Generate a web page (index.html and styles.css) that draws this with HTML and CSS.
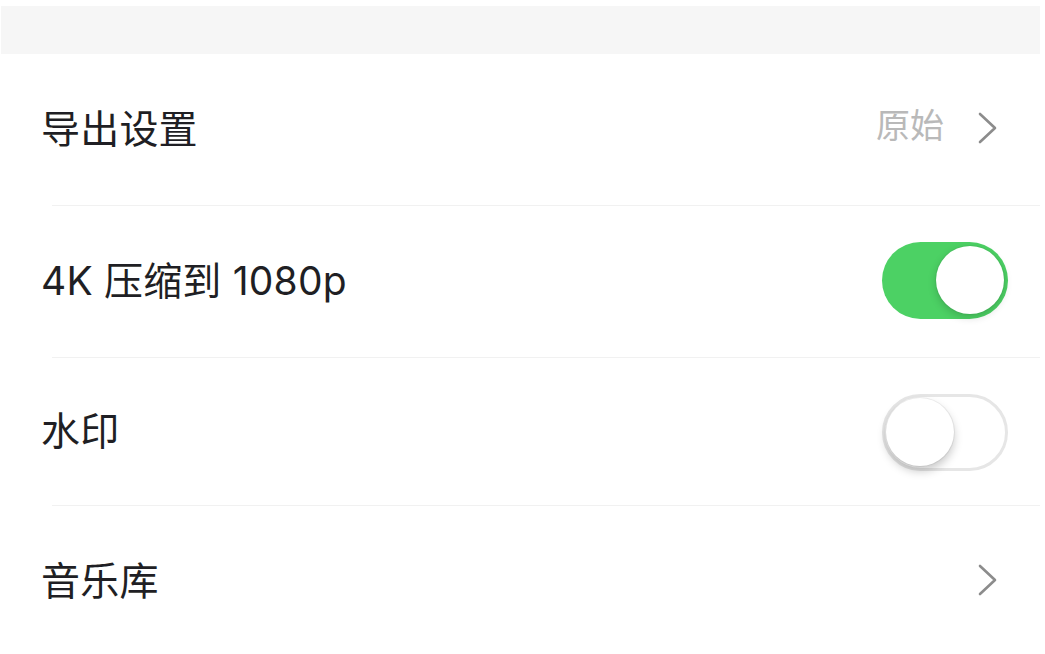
FILE: index.html
```html
<!DOCTYPE html>
<html lang="zh-CN">
<head>
<meta charset="utf-8">
<title>设置</title>
<link rel="stylesheet" href="styles.css">
</head>
<body>
<div class="page">
  <div class="topbar"></div>
  <div class="list">
    <div class="row">
      <span class="label">导出设置</span>
      <div class="value-wrap">
        <span class="value">原始</span>
        <svg class="chevron" viewBox="0 0 19 32" width="19" height="32"><polyline points="2,2 17,16 2,30" fill="none" stroke="#8c8c8c" stroke-width="2.6" stroke-linecap="round" stroke-linejoin="round"/></svg>
      </div>
    </div>
    <div class="row">
      <span class="label">4K 压缩到 1080p</span>
      <div class="switch on"><div class="knob"></div></div>
    </div>
    <div class="row short">
      <span class="label">水印</span>
      <div class="switch off"><div class="knob"></div></div>
    </div>
    <div class="row last">
      <span class="label">音乐库</span>
      <div class="value-wrap">
        <svg class="chevron" viewBox="0 0 19 32" width="19" height="32"><polyline points="2,2 17,16 2,30" fill="none" stroke="#8c8c8c" stroke-width="2.6" stroke-linecap="round" stroke-linejoin="round"/></svg>
      </div>
    </div>
  </div>
</div>
</body>
</html>
```
FILE: styles.css
```css
html, body {
  margin: 0;
  padding: 0;
  background: #ffffff;
}
body {
  font-family: "Inter", "Noto Sans CJK SC", "Noto Sans", sans-serif;
  color: #1f1f24;
  width: 1045px;
  height: 654px;
  overflow: hidden;
}
.page {
  padding: 6px 5px 0 1px;
}
.topbar {
  height: 48px;
  background: #f6f6f6;
}
.list {
  display: flex;
  flex-direction: column;
}
.row {
  height: 152px;
  box-sizing: border-box;
  display: flex;
  align-items: center;
  justify-content: space-between;
  padding: 0 32px 0 40px;
  background: linear-gradient(#f1f1f1, #f1f1f1) no-repeat 51px 100% / calc(100% - 51px) 1px;
}
.row.short {
  height: 148px;
}
.row.last {
  background: none;
}
.label {
  font-size: 39px;
  line-height: 1;
  margin-top: -4px;
  letter-spacing: 0.2px;
}
.value-wrap {
  display: flex;
  align-items: center;
  gap: 34px;
  margin-right: 11px;
  margin-top: -4px;
}
.value {
  font-size: 34px;
  line-height: 1;
  color: #b9b9b9;
  margin-top: -4px;
}
.chevron {
  display: block;
}
.switch {
  width: 126px;
  height: 77px;
  box-sizing: border-box;
  border-radius: 39px;
  display: flex;
  align-items: center;
  padding: 0 4px;
}
.switch.on {
  background: #4cd164;
  justify-content: flex-end;
  margin-top: -4px;
}
.switch.off {
  background: #ffffff;
  border: 3px solid #e6e6e6;
  justify-content: flex-start;
  padding: 0 1px;
}
.knob {
  width: 68px;
  height: 68px;
  border-radius: 50%;
  background: #ffffff;
  box-shadow: 0 3px 8px rgba(0, 0, 0, 0.18), 0 0 0 1px rgba(0, 0, 0, 0.04);
}
.switch.off .knob {
  box-shadow: 0 5px 10px rgba(0, 0, 0, 0.22), 0 0 0 1px rgba(0, 0, 0, 0.06);
}
```
